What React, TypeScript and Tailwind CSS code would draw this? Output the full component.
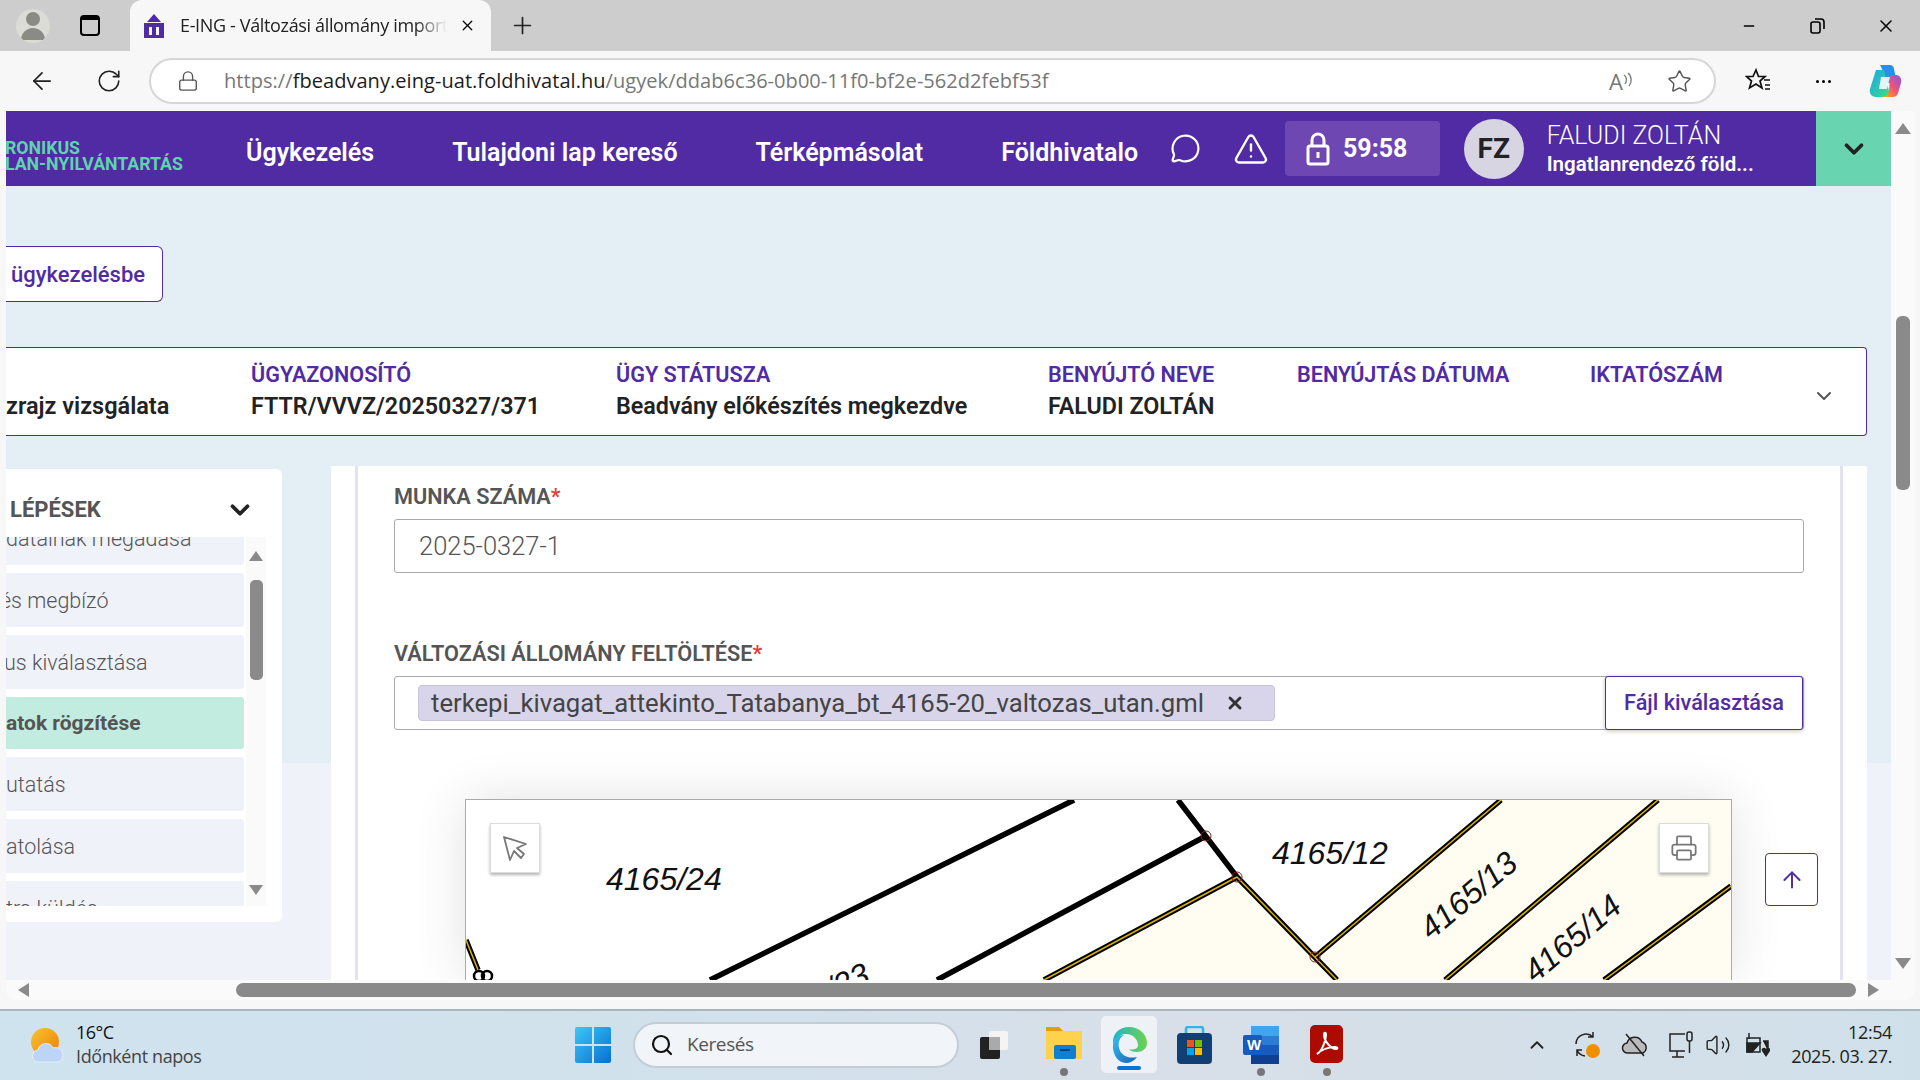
import {
  ArrowLeft,
  ArrowUp,
  ChevronDown,
  ChevronUp,
  Lock,
  MessageCircle,
  Minus,
  Plus,
  Printer,
  RotateCw,
  Search,
  Star,
  TriangleAlert,
  Volume2,
  X,
} from "lucide-react";

const exo = "font-['Roboto',sans-serif]";
const ui = "font-['Open_Sans',sans-serif]";

function TabBar() {
  return (
    <div className={`flex h-[51px] items-center bg-[#cdcdcd] ${ui}`}>
      <div className="ml-[16px] flex h-[34px] w-[34px] flex-col items-center justify-center overflow-hidden rounded-full bg-[#dcdcd6]">
        <div className="h-[14px] w-[14px] rounded-full bg-[#8b8b86]" />
        <div className="mt-[2px] h-[12px] w-[24px] rounded-t-full bg-[#8b8b86]" />
      </div>
      <div className="ml-[30px] h-[21px] w-[20px] rounded-[4px] border-2 border-t-[5px] border-black" />
      <div className="ml-[30px] flex h-full w-[361px] items-center rounded-t-[12px] bg-[#f7f7f7] pl-[13px]">
        <svg width="22" height="24" viewBox="0 0 22 24">
          <path d="M11 0l7 8H4z" fill="#512ba3" />
          <path d="M1 9h20v15H1z" fill="#512ba3" />
          <path d="M6 13h3v8H6zM13 13h3v8h-3z" fill="#f7f7f7" />
        </svg>
        <span className="ml-[15px] w-[267px] overflow-hidden whitespace-nowrap text-[18px] tracking-[-0.35px] text-[#222] [mask-image:linear-gradient(90deg,#000_88%,transparent)]">
          E-ING - Változási állomány import
        </span>
        <X className="ml-[12px] h-[17px] w-[17px] text-black" strokeWidth={1.8} />
      </div>
      <Plus className="ml-[18px] h-[27px] w-[27px] text-[#222]" strokeWidth={1.5} />
      <div className="ml-auto flex items-center">
        <Minus className="h-[16px] w-[16px] text-black" strokeWidth={2} />
        <svg className="ml-[52px]" width="17" height="17" viewBox="0 0 17 17" fill="none" stroke="#000" strokeWidth="1.6">
          <rect x="2" y="5" width="9" height="11" rx="2" />
          <path d="M6 2h6a3 3 0 0 1 3 3v7" />
        </svg>
        <X className="ml-[50px] mr-[24px] h-[20px] w-[20px] text-black" strokeWidth={1.8} />
      </div>
    </div>
  );
}

function Toolbar() {
  return (
    <div className={`flex h-[60px] items-center bg-[#f7f7f7] ${ui}`}>
      <ArrowLeft className="ml-[28px] h-[28px] w-[28px] text-[#222]" strokeWidth={1.5} />
      <RotateCw className="ml-[40px] h-[26px] w-[26px] text-[#222]" strokeWidth={1.5} />
      <div className="ml-[27px] flex h-[46px] w-[1567px] items-center rounded-full border-2 border-[#d6d6d6] bg-white">
        <Lock className="ml-[26px] h-[22px] w-[22px] text-[#555]" strokeWidth={1.5} />
        <span className="ml-[25px] whitespace-nowrap text-[20px] tracking-[0.05px] text-[#777]">
          https://<span className="text-[#1c1c1c]">fbeadvany.eing-uat.foldhivatal.hu</span>/ugyek/ddab6c36-0b00-11f0-bf2e-562d2febf53f
        </span>
        <div className="ml-auto flex items-center">
          <span className="text-[22px] leading-none text-[#777]">A</span>
          <svg width="10" height="18" viewBox="0 0 10 18" fill="none" stroke="#777" strokeWidth="1.3">
            <path d="M1 3c3 2 3 6 1 9M5 1c4 3 4 10 1 13" />
          </svg>
          <Star className="ml-[34px] mr-[22px] h-[25px] w-[25px] text-[#555]" strokeWidth={1.4} />
        </div>
      </div>
      <svg className="ml-[29px]" width="28" height="28" viewBox="0 0 28 28" fill="none" stroke="#111" strokeWidth="1.7">
        <path d="M11 3l2.500 6.500H20l-5 4.500 2 7-6-4-6.500 4 2-7-5-4.500h6.500z" />
        <path d="M19 13h6M20 18h5M20 22h5" />
      </svg>
      <div className="ml-[43px] flex gap-[3px]">
        <div className="h-[3px] w-[3px] rounded-full bg-black" />
        <div className="h-[3px] w-[3px] rounded-full bg-black" />
        <div className="h-[3px] w-[3px] rounded-full bg-black" />
      </div>
      <svg className="ml-[37px]" width="34" height="32" viewBox="0 0 34 32">
        <defs>
          <linearGradient id="cpA" x1="0" y1="0" x2="1" y2="1">
            <stop offset="0" stopColor="#1aa7ec" />
            <stop offset="1" stopColor="#3ddc84" />
          </linearGradient>
          <linearGradient id="cpB" x1="0" y1="1" x2="1" y2="0">
            <stop offset="0" stopColor="#ffb000" />
            <stop offset="0.5" stopColor="#f0527a" />
            <stop offset="1" stopColor="#7a5cf0" />
          </linearGradient>
        </defs>
        <path d="M12 0h10c2 0 4 2 4 4l3 14H18L14 4c-1-2-2-4-2-4z" fill="#2a8fea" />
        <path d="M8 5h8l5 21c1 4-2 6-4 6H8C3 32 1 28 2 24z" fill="url(#cpA)" />
        <path d="M22 10h6c4 0 6 4 5 8l-3 10c-1 3-3 4-6 4h-9c3-1 5-3 6-6z" fill="url(#cpB)" />
        <path d="M13 12h9l-3 12h-8z" fill="#fff" opacity="0.85" />
      </svg>
    </div>
  );
}

function AppHeader() {
  const navLink = "shrink-0 whitespace-nowrap pt-[8px] text-[25px] font-semibold";
  return (
    <div className={`flex h-[75px] shrink-0 items-center bg-[#512ba3] text-white ${exo}`}>
      <div className="-ml-px w-[241px] shrink-0 pt-[15px] text-[17.700px] font-bold leading-[16px] text-[#5fd3ae]">
        <div>RONIKUS</div>
        <div className="whitespace-nowrap">LAN-NYILVÁNTARTÁS</div>
      </div>
      <span className={navLink}>Ügykezelés</span>
      <span className={`ml-[78px] ${navLink}`}>Tulajdoni lap kereső</span>
      <span className={`ml-[78px] ${navLink}`}>Térképmásolat</span>
      <span className={`ml-[78px] w-[169px] ${navLink}`}>Földhivatalo</span>
      <MessageCircle className="h-[31px] w-[31px]" strokeWidth={1.7} />
      <TriangleAlert className="ml-[32px] h-[36px] w-[36px]" strokeWidth={1.6} />
      <div className="ml-[16px] flex h-[55px] w-[155px] items-center rounded-[4px] bg-[#6f47b3] pl-[21px]">
        <svg width="24" height="34" viewBox="0 0 24 34" fill="none" stroke="#fff" strokeWidth="3">
          <rect x="2" y="14" width="20" height="18" rx="2" />
          <path d="M6 14V8a6 6 0 0 1 12 0v6" />
          <path d="M12 20v6" />
        </svg>
        <span className="ml-[13px] text-[25px] font-bold">59:58</span>
      </div>
      <div className="ml-[24px] flex h-[60px] w-[60px] items-center justify-center rounded-full bg-[#d8d5e3] text-[28px] font-bold text-[#222]">
        FZ
      </div>
      <div className="ml-[23px] w-[270px]">
        <div className="text-[25px] font-light leading-[30px]">FALUDI ZOLTÁN</div>
        <div className="text-[20.500px] font-semibold leading-[26px]">Ingatlanrendező föld...</div>
      </div>
      <div className="flex h-full w-[75px] items-center justify-center bg-[#68d4b0]">
        <ChevronDown className="h-[30px] w-[30px] text-[#222]" strokeWidth={3} />
      </div>
    </div>
  );
}

function InfoCol({ className, label, value }: { className: string; label: string; value?: string }) {
  return (
    <div className={`shrink-0 whitespace-nowrap ${className}`}>
      <div className="text-[21.600px] font-semibold leading-[30px] text-[#512ba3]">{label}</div>
      <div className="h-[32px] text-[23.300px] font-semibold leading-[32px] text-[#222]">{value}</div>
    </div>
  );
}

function InfoCard() {
  return (
    <div className={`mt-[45px] flex h-[89px] w-[1861px] shrink-0 items-center rounded-r-[4px] border border-l-0 border-[#512ba3] bg-white pb-[2px] ${exo}`}>
      <div className="w-[245px] whitespace-nowrap pt-[30px] text-[23.500px] font-semibold leading-[32px] text-[#222]">
        zrajz vizsgálata
      </div>
      <InfoCol className="w-[365px]" label="ÜGYAZONOSÍTÓ" value="FTTR/VVVZ/20250327/371" />
      <InfoCol className="w-[432px]" label="ÜGY STÁTUSZA" value="Beadvány előkészítés megkezdve" />
      <InfoCol className="w-[249px]" label="BENYÚJTÓ NEVE" value="FALUDI ZOLTÁN" />
      <InfoCol className="w-[293px]" label="BENYÚJTÁS DÁTUMA" />
      <InfoCol className="w-[222px]" label="IKTATÓSZÁM" />
      <ChevronDown className="mt-[10px] h-[24px] w-[24px] text-[#555]" strokeWidth={2} />
    </div>
  );
}

function StepItem({ text, active, indent }: { text: string; active?: boolean; indent?: string }) {
  return (
    <div
      className={`flex shrink-0 items-center overflow-hidden whitespace-nowrap rounded-r-[3px] pt-[2px] ${
        active ? "h-[52px] bg-[#c1ecdf] text-[21px] font-bold text-[#555]" : "h-[54px] bg-[#f0f2fa] text-[21.500px] font-light text-[#555]"
      }`}
    >
      <span className={indent}>{text}</span>
    </div>
  );
}

function Sidebar() {
  return (
    <div className={`mt-[3px] h-[453px] w-[276px] shrink-0 rounded-r-[6px] bg-white ${exo}`}>
      <div className="flex h-[68px] items-center pl-[4px] pr-[27px] pt-[12px]">
        <span className="text-[22px] font-bold text-[#555]">LÉPÉSEK</span>
        <ChevronDown className="ml-auto mt-[2px] h-[30px] w-[30px] text-[#222]" strokeWidth={3} />
      </div>
      <div className="flex h-[369px] w-[261px] overflow-hidden">
        <div className="-mt-[26px] flex w-[238px] shrink-0 flex-col gap-[8px]">
          <StepItem text="datainak megadása" />
          <StepItem text="és megbízó" indent="-ml-[11px] pl-[5px]" />
          <StepItem text="us kiválasztása" indent="-ml-[2px]" />
          <StepItem text="atok rögzítése" active />
          <StepItem text="utatás" />
          <StepItem text="atolása" />
          <StepItem text="tra küldés" />
        </div>
        <div className="ml-[2px] flex w-[20px] flex-col items-center bg-[#fafafa] pt-[14px]">
          <div className="h-0 w-0 border-x-[7px] border-b-[10px] border-x-transparent border-b-[#8a8a8a]" />
          <div className="mt-[19px] h-[100px] w-[13px] rounded-[5px] bg-[#8a8a8a]" />
          <div className="mt-[205px] h-0 w-0 border-x-[7px] border-t-[10px] border-x-transparent border-t-[#8a8a8a]" />
        </div>
      </div>
    </div>
  );
}

function ParcelMap() {
  return (
    <div className="relative ml-[108px] h-[180px] w-[1265px] shrink-0 bg-white outline outline-1 outline-[#aaa] shadow-[0_0_50px_rgba(0,0,0,0.12)]">
      <svg className="block" width="1265" height="180" viewBox="0 0 1265 180">
        <path d="M771 77L578 180H871zM849 157L1035 0H1266V180H871L849 157z" fill="#fffdf2" />
        <g stroke="#000" fill="none" strokeWidth="5.500">
          <path d="M608 0L244 180M740 36L471 180M712 0L771 77" />
          <path d="M771 77L578 180M771 77L871 180M1035 0L849 157M1192 0L979 180M1265 86L1138 180M0 140L12 170" />
        </g>
        <g stroke="#d9b300" fill="none" strokeWidth="1.500">
          <path d="M771 77L578 180M771 77L871 180M1035 0L849 157M1192 0L979 180M1265 86L1138 180M0 140L12 170" />
        </g>
        <g stroke="#8a1c1c" fill="none" strokeWidth="1">
          <circle cx="740" cy="36" r="5" />
          <circle cx="771" cy="77" r="5" />
          <circle cx="849" cy="157" r="5" />
        </g>
        <g stroke="#000" fill="none" strokeWidth="2.500">
          <circle cx="13" cy="176" r="5" />
          <circle cx="21" cy="176" r="5" />
        </g>
        <g fontFamily="'Liberation Sans',sans-serif" fontStyle="italic" fontSize="32" fill="#111">
          <text x="140" y="90">4165/24</text>
          <text x="806" y="64">4165/12</text>
          <text x="406" y="182" textAnchor="end" transform="rotate(-25 406 182)">4165/23</text>
          <text x="1003" y="106" textAnchor="middle" transform="rotate(-40 1003 96)">4165/13</text>
          <text x="1107" y="149" textAnchor="middle" transform="rotate(-40 1107 139)">4165/14</text>
        </g>
      </svg>
      <div className="absolute left-[24px] top-[23px] flex h-[50px] w-[50px] items-center justify-center border border-[#ddd] bg-white shadow-[0_2px_3px_rgba(0,0,0,0.3)]">
        <svg width="28" height="28" viewBox="0 0 28 28" fill="none" stroke="#777" strokeWidth="1.8" strokeLinejoin="round">
          <path d="M3 3l6 23 4-9 7 7 3-4-7-6 9-4z" />
        </svg>
      </div>
      <div className="absolute left-[1193px] top-[23px] flex h-[50px] w-[50px] items-center justify-center border border-[#ddd] bg-white shadow-[0_2px_3px_rgba(0,0,0,0.3)]">
        <Printer className="h-[28px] w-[28px] text-[#777]" strokeWidth={1.5} />
      </div>
    </div>
  );
}

function FormPanel() {
  return (
    <div className={`ml-[49px] h-[514px] w-[1536px] shrink-0 bg-white px-[24px] ${exo}`}>
      <div className="relative h-full overflow-hidden border-x-[3px] border-[#e3e3f0] pt-[19px]">
        <div className="ml-[36px] w-[1410px]">
          <div className="text-[21.700px] font-semibold leading-[24px] text-[#555]">
            MUNKA SZÁMA<span className="text-[#e0403a]">*</span>
          </div>
          <div className="mt-[10px] flex h-[54px] items-center rounded-[3px] border border-[#aaa] pl-[24px] text-[25.500px] font-light text-[#555]">
            2025-0327-1
          </div>
          <div className="mt-[69px] text-[21.700px] font-semibold leading-[24px] text-[#555]">
            VÁLTOZÁSI ÁLLOMÁNY FELTÖLTÉSE<span className="text-[#e0403a]">*</span>
          </div>
          <div className="mt-[10px] flex h-[54px] items-center rounded-[3px] border border-[#aaa] pl-[23px]">
            <div className="flex h-[36px] w-[857px] shrink-0 items-center rounded-[4px] border border-[#c8c4e0] bg-[#d8d5ea] pl-[12px] text-[25.700px] text-[#444]">
              <span className="w-[794px] whitespace-nowrap">terkepi_kivagat_attekinto_Tatabanya_bt_4165-20_valtozas_utan.gml</span>
              <X className="h-[20px] w-[20px] text-[#333]" strokeWidth={3.5} />
            </div>
            <div className="ml-auto flex h-[54px] w-[198px] items-center justify-center rounded-[3px] border border-[#512ba3] bg-white text-[21.700px] font-medium text-[#512ba3] shadow-[0_1px_4px_rgba(0,0,0,0.25)]">
              Fájl kiválasztása
            </div>
          </div>
        </div>
        <div className="mt-[70px]">
          <ParcelMap />
        </div>
        <div className="absolute right-[22px] top-[387px] flex h-[53px] w-[53px] items-center justify-center rounded-[4px] border border-[#512ba3] bg-white">
          <ArrowUp className="h-[26px] w-[26px] text-[#512ba3]" strokeWidth={1.8} />
        </div>
      </div>
    </div>
  );
}

function PageScrollbars() {
  return (
    <div className="flex h-full w-[24px] shrink-0 flex-col items-center bg-[#fafafa] pt-[12px]">
      <div className="h-0 w-0 border-x-[8px] border-b-[11px] border-x-transparent border-b-[#8a8a8a]" />
      <div className="mt-[182px] h-[174px] w-[14px] rounded-[6px] bg-[#8a8a8a]" />
      <div className="mt-[468px] h-0 w-0 border-x-[8px] border-t-[11px] border-x-transparent border-t-[#8a8a8a]" />
    </div>
  );
}

function Page() {
  return (
    <div className="flex flex-1 flex-col overflow-hidden rounded-b-[10px] bg-[#fafafa]">
      <div className="flex h-[869px]">
        <div className="w-[1885px] overflow-hidden bg-[linear-gradient(#e3eef5_0,#e3eef5_652px,#f0f2fa_652px)]">
          <AppHeader />
          <div className={`mt-[60px] flex h-[56px] w-[157px] items-center rounded-r-[6px] border border-l-0 border-[#512ba3] bg-white pl-[5px] text-[22px] font-medium text-[#512ba3] ${exo}`}>
            ügykezelésbe
          </div>
          <InfoCard />
          <div className="mt-[30px] flex">
            <Sidebar />
            <FormPanel />
          </div>
        </div>
        <PageScrollbars />
      </div>
      <div className="flex h-[20px] items-center pl-[12px]">
        <div className="h-0 w-0 border-y-[7px] border-r-[11px] border-y-transparent border-r-[#8a8a8a]" />
        <div className="ml-[207px] h-[14px] w-[1620px] rounded-full bg-[#8a8a8a]" />
        <div className="ml-[12px] h-0 w-0 border-y-[7px] border-l-[11px] border-y-transparent border-l-[#8a8a8a]" />
      </div>
    </div>
  );
}

function Taskbar() {
  return (
    <div className={`flex h-[71px] items-center border-t-2 border-[#a9b4bd] bg-[linear-gradient(90deg,#cfe3ee,#d2e1ec_40%,#d8dfe8_60%,#d0e0ea)] pb-[2px] ${ui}`}>
      <svg className="ml-[30px]" width="36" height="36" viewBox="0 0 36 36">
        <defs>
          <linearGradient id="sun" x1="0" y1="0" x2="1" y2="1">
            <stop offset="0" stopColor="#f8c52c" />
            <stop offset="1" stopColor="#ef7d0a" />
          </linearGradient>
        </defs>
        <circle cx="15" cy="15" r="14" fill="url(#sun)" />
        <path d="M9 35a6 6 0 0 1-1-12 8 8 0 0 1 15-2 7 7 0 0 1 5 14z" fill="#bcd4f5" stroke="#e6effb" />
      </svg>
      <div className="mb-[2px] ml-[10px] w-[499px] text-[18px]">
        <div className="leading-[24px] tracking-[-0.5px] text-[#111]">16°C</div>
        <div className="leading-[24px] tracking-[-0.4px] text-[#444]">Időnként napos</div>
      </div>
      <svg width="36" height="36" viewBox="0 0 36 36">
        <defs>
          <linearGradient id="win" x1="0" y1="0" x2="1" y2="1">
            <stop offset="0" stopColor="#3ec6f5" />
            <stop offset="1" stopColor="#0570d3" />
          </linearGradient>
        </defs>
        <path d="M0 2a2 2 0 0 1 2-2h15v17H0zM19 0h15a2 2 0 0 1 2 2v15H19zM0 19h17v17H2a2 2 0 0 1-2-2zM19 19h17v15a2 2 0 0 1-2 2H19z" fill="url(#win)" />
      </svg>
      <div className="ml-[22px] flex h-[46px] w-[326px] items-center rounded-full border-2 border-[#c3cdd6] bg-[#f1f4f8] pl-[15px]">
        <Search className="h-[24px] w-[24px] text-[#111]" strokeWidth={2.2} />
        <span className="ml-[13px] text-[19px] tracking-[-0.4px] text-[#555]">Keresés</span>
      </div>
      <svg className="ml-[21px]" width="28" height="28" viewBox="0 0 28 28">
        <rect x="9" y="0" width="19" height="19" rx="2" fill="#f4f4f4" />
        <rect x="0" y="6" width="20" height="22" rx="2" fill="#222" />
        <rect x="9" y="6" width="11" height="13" fill="#aaa" />
      </svg>
      <div className="relative ml-[36px] flex h-[40px] w-[40px] flex-col">
        <svg width="40" height="36" viewBox="0 0 40 36">
          <path d="M2 2h13l4 4h19v28H2z" fill="#ffd24d" />
          <path d="M2 2h13l4 4H2z" fill="#dfa00c" />
          <rect x="10" y="20" width="22" height="14" rx="2" fill="#0f7fd1" />
          <rect x="16" y="24" width="10" height="2" fill="#073f70" />
        </svg>
        <div className="absolute left-[16px] top-[43px] h-[8px] w-[8px] rounded-full bg-[#777]" />
      </div>
      <div className="relative ml-[17px] flex h-[57px] w-[56px] items-center justify-center rounded-[5px] bg-[#eef2f6]">
        <svg width="36" height="36" viewBox="0 0 36 36">
          <defs>
            <linearGradient id="edgeA" x1="0" y1="0" x2="1" y2="1">
              <stop offset="0" stopColor="#35c1f1" />
              <stop offset="1" stopColor="#1a62b8" />
            </linearGradient>
            <linearGradient id="edgeB" x1="0" y1="0" x2="1" y2="0">
              <stop offset="0" stopColor="#1fb6c5" />
              <stop offset="1" stopColor="#6ed24f" />
            </linearGradient>
          </defs>
          <path d="M18 0c10 0 18 7 18 16 0 6-5 9-10 9-4 0-7-1-8-3 2 1 9 1 9-4C27 12 21 6 14 7 7 8 3 13 2 17 1 7 8 0 18 0z" fill="url(#edgeB)" />
          <path d="M2 17c1-6 6-9 11-9-5 3-6 8-5 13 2 8 10 11 18 9-3 4-7 6-11 6C7 36 1 27 2 17z" fill="url(#edgeA)" />
        </svg>
        <div className="absolute bottom-[3px] left-[16px] h-[4px] w-[24px] rounded-full bg-[#0a74d6]" />
      </div>
      <svg className="ml-[20px]" width="35" height="38" viewBox="0 0 35 38">
        <path d="M9 8V3a2 2 0 0 1 2-2h13a2 2 0 0 1 2 2v5" fill="none" stroke="#2fb5e8" strokeWidth="2.500" />
        <rect x="0" y="7" width="35" height="31" rx="4" fill="#123f73" />
        <rect x="10" y="14" width="7" height="7" fill="#f25022" />
        <rect x="18" y="14" width="7" height="7" fill="#7fba00" />
        <rect x="10" y="22" width="7" height="7" fill="#00a4ef" />
        <rect x="18" y="22" width="7" height="7" fill="#ffb900" />
      </svg>
      <div className="relative ml-[31px] h-[40px] w-[35px]">
        <svg width="36" height="40" viewBox="0 0 36 40">
          <rect x="8" y="1" width="28" height="38" rx="2" fill="#2b7cd3" />
          <rect x="8" y="1" width="28" height="10" fill="#41a5ee" />
          <rect x="8" y="20" width="28" height="10" fill="#185abd" />
          <rect x="8" y="30" width="28" height="9" fill="#103f91" />
          <rect x="0" y="10" width="19" height="20" rx="2" fill="#185abd" />
          <text x="4" y="25" fontFamily="'Liberation Sans',sans-serif" fontWeight="700" fontSize="15" fill="#fff">W</text>
        </svg>
        <div className="absolute left-[14px] top-[43px] h-[8px] w-[8px] rounded-full bg-[#777]" />
      </div>
      <div className="relative ml-[32px] h-[40px] w-[33px]">
        <svg width="33" height="38" viewBox="0 0 33 38" fill="none">
          <rect width="33" height="38" rx="5" fill="#ad0b00" />
          <path d="M7 29c4-2 9-12 9-19 0-3-2-3-2 0 0 6 7 14 12 14 2 0 2-2-1-2-5 0-13 2-18 7z" stroke="#fff" strokeWidth="2" />
        </svg>
        <div className="absolute left-[13px] top-[43px] h-[8px] w-[8px] rounded-full bg-[#777]" />
      </div>
      <ChevronUp className="ml-[183px] h-[22px] w-[22px] text-[#222]" strokeWidth={2} />
      <svg className="ml-[25px]" width="28" height="28" viewBox="0 0 28 28" fill="none" stroke="#222" strokeWidth="1.500">
        <path d="M3 13a10 10 0 0 1 17-7M20 1v5h-5M12 25a10 10 0 0 1-8-6M4 25v-6h5" />
        <circle cx="20" cy="20" r="7" fill="#f09000" stroke="none" />
      </svg>
      <svg className="ml-[20px]" width="28" height="26" viewBox="0 0 28 26" fill="#bbb" stroke="#222" strokeWidth="1.500">
        <path d="M7 21a5 5 0 0 1-1-10 8 8 0 0 1 15-1 6 6 0 0 1 1 11z" />
        <path d="M5 2l18 22" fill="none" />
      </svg>
      <svg className="ml-[19px]" width="26" height="28" viewBox="0 0 26 28" fill="none" stroke="#222" strokeWidth="1.500">
        <path d="M17 3H2v17h15M9 20v6M4 26h12" />
        <rect x="19" y="1" width="5" height="9" rx="2" />
        <path d="M21.500 10v12" />
      </svg>
      <Volume2 className="ml-[11px] h-[26px] w-[26px] text-[#222]" strokeWidth={1.3} />
      <svg className="ml-[13px]" width="26" height="28" viewBox="0 0 26 28" fill="#222" stroke="#222" strokeWidth="1.500">
        <path d="M3 7h13v14H3z" fill="none" />
        <path d="M3 12h13l-8 9H3zM5 2v6M19 10h5v10" />
        <path d="M18 20l4 6 4-6a2 2 0 0 0-4-2 2 2 0 0 0-4 2z" stroke="none" />
      </svg>
      <div className="mb-[2px] ml-auto mr-[28px] text-right text-[18px] tracking-[-0.4px] text-[#222]">
        <div className="leading-[24px]">12:54</div>
        <div className="leading-[24px]">2025. 03. 27.</div>
      </div>
    </div>
  );
}

export default function App() {
  return (
    <div className="flex h-[1080px] w-[1920px] flex-col overflow-hidden bg-[#f7f7f7]">
      <TabBar />
      <Toolbar />
      <div className="flex h-[898px] flex-col pb-[9px] pl-[6px] pr-[5px]">
        <Page />
      </div>
      <Taskbar />
    </div>
  );
}
